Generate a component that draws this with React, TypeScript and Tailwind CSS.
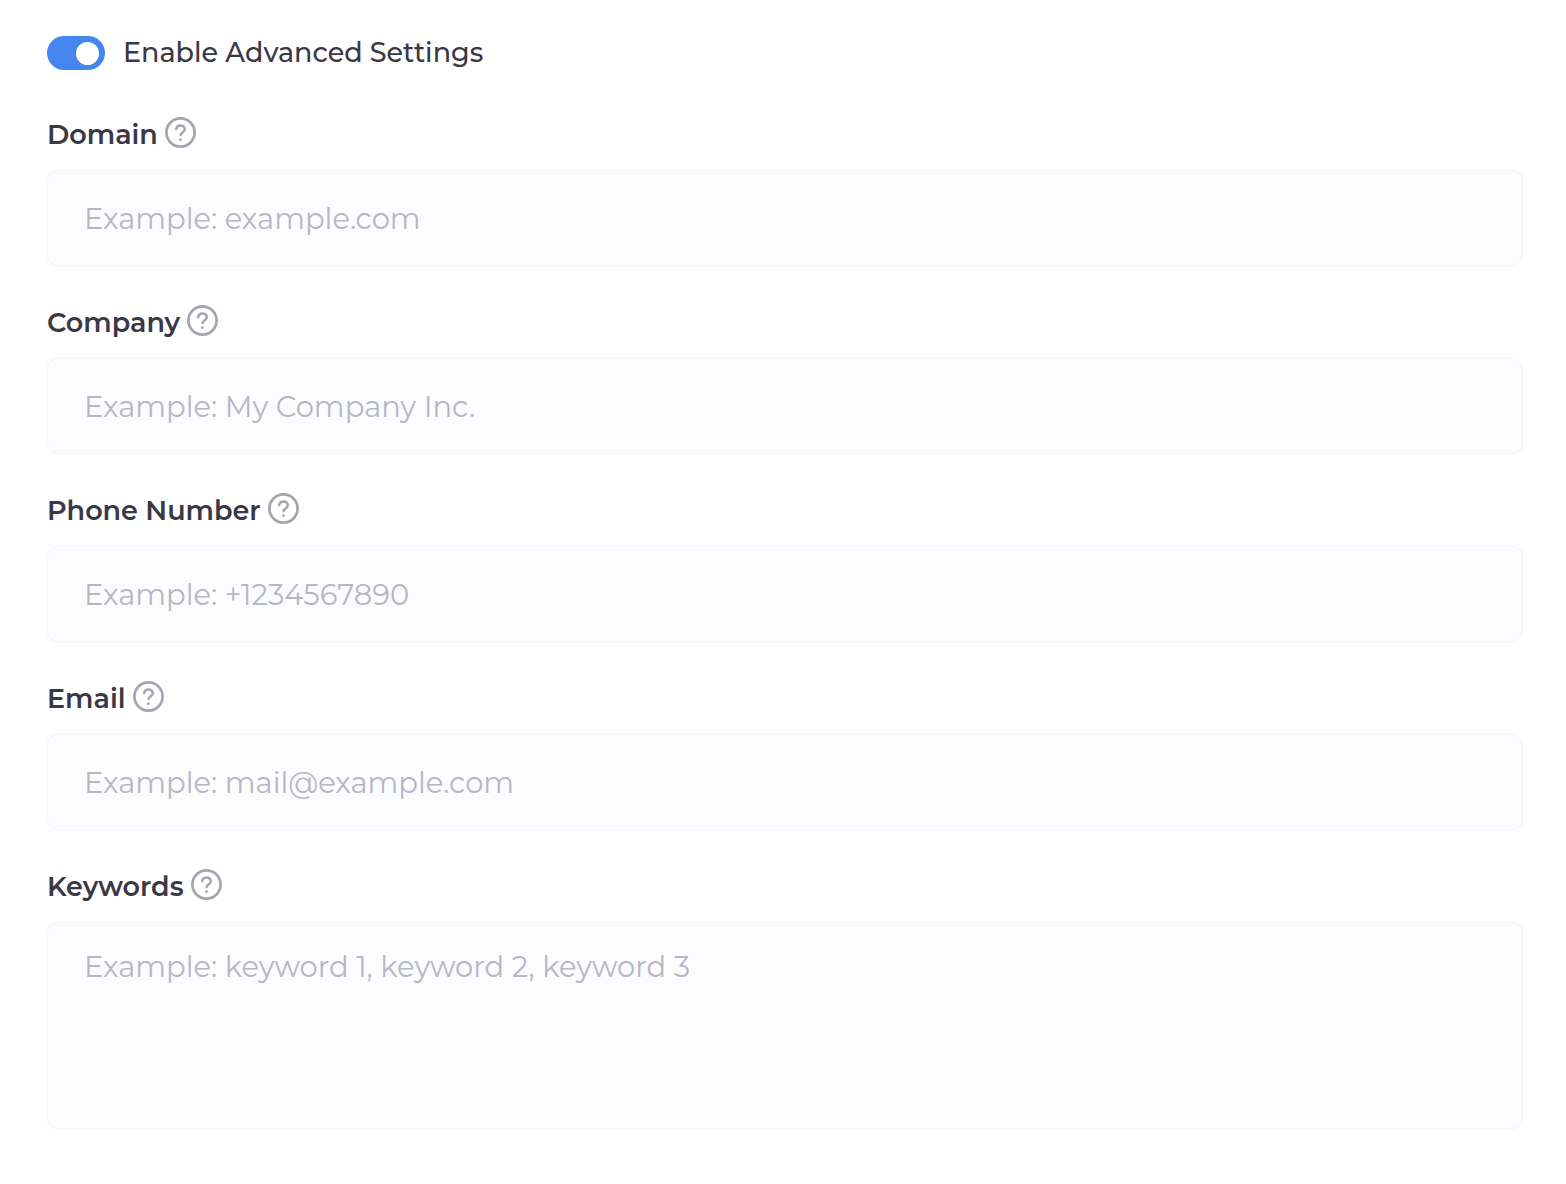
import { FC, InputHTMLAttributes, TextareaHTMLAttributes, ReactNode } from "react";
import { clsx } from "clsx";

const control =
  "block w-full rounded-[10px] border border-[#f3f3fa] bg-[#fcfcfe] px-9 text-[29px] leading-9 text-[#3a3846] placeholder:text-[#b7b6c7] outline-none focus:border-[#4485f0]";

export default function App() {
  return (
    <form className="flex flex-col gap-[39px] bg-white pt-9 pb-14 pl-[47px] pr-[43px] font-['Montserrat','Inter',sans-serif] text-[#3a3846]">
      <Toggle label="Enable Advanced Settings" />
      <div className="flex flex-col gap-[39px] pt-2">
        <Field id="domain" label="Domain">
          <TextInput id="domain" placeholder="Example: example.com" />
        </Field>
        <Field id="company" label="Company">
          <TextInput id="company" placeholder="Example: My Company Inc." />
        </Field>
        <Field id="phone" label="Phone Number">
          <TextInput id="phone" type="tel" placeholder="Example: +1234567890" />
        </Field>
        <Field id="email" label="Email">
          <TextInput id="email" type="email" placeholder="Example: mail@example.com" />
        </Field>
        <Field id="keywords" label="Keywords">
          <TextArea id="keywords" placeholder="Example: keyword 1, keyword 2, keyword 3" />
        </Field>
      </div>
    </form>
  );
}

const Toggle: FC<{ label: string }> = ({ label }) => {
  return (
    <label className="flex w-fit cursor-pointer items-center gap-[18px] text-[27px] leading-[34px] font-medium">
      <input
        type="checkbox"
        role="switch"
        defaultChecked
        className="flex h-[34px] w-[58px] cursor-pointer appearance-none items-center rounded-full bg-[#c9c8d6] px-1.5 before:size-[23px] before:rounded-full before:bg-white checked:justify-end checked:bg-[#4485f0]"
      />
      {label}
    </label>
  );
};

interface FieldProps {
  id: string;
  label: string;
  children: ReactNode;
}

const Field: FC<FieldProps> = ({ id, label, children }) => {
  return (
    <div className="flex flex-col gap-[21px]">
      <div className="flex h-8 items-start gap-[7px]">
        <label htmlFor={id} className="text-[27px] leading-9 font-semibold">
          {label}
        </label>
        <button type="button" aria-label={`About ${label}`} className="cursor-pointer text-[#a5a4b0]">
          <HelpIcon />
        </button>
      </div>
      {children}
    </div>
  );
};

const TextInput: FC<InputHTMLAttributes<HTMLInputElement>> = ({ className, ...props }) => (
  <input type="text" className={clsx(control, "h-24", className)} {...props} />
);

const TextArea: FC<TextareaHTMLAttributes<HTMLTextAreaElement>> = ({ className, ...props }) => (
  <textarea className={clsx(control, "h-[207px] resize-none py-[26px]", className)} {...props} />
);

const HelpIcon: FC = () => (
  <svg viewBox="0 0 31 31" fill="none" stroke="currentColor" className="block size-[31px]">
    <circle cx="15.5" cy="15.5" r="14.1" strokeWidth="2.7" />
    <path d="M11.2 12.2c.3-2.3 2-3.8 4.3-3.8 2.4 0 4.3 1.6 4.3 3.9 0 3.1-4.2 3.3-4.2 5.8" strokeWidth="2.5" strokeLinecap="round" />
    <circle cx="15.4" cy="22.7" r="1.4" fill="currentColor" stroke="none" />
  </svg>
);
